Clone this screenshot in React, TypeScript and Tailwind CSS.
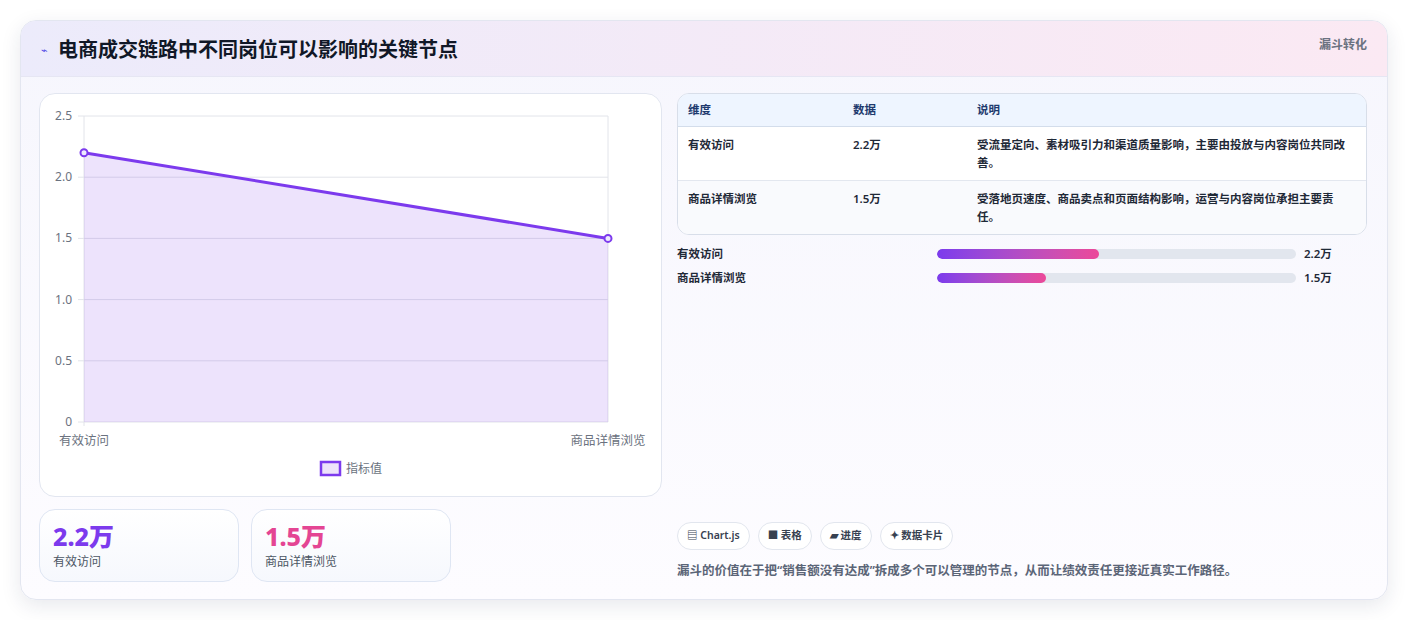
import React from "react";

const font = { fontFamily: '"Noto Sans", "Noto Sans CJK SC", sans-serif' };

function Chart() {
  const x0 = 44, x1 = 568, yTop = 22, yBot = 328;
  const y = (v: number) => yBot - (v / 2.5) * (yBot - yTop);
  const ticks = [0, 0.5, 1, 1.5, 2, 2.5];
  return (
    <svg width="623" height="403" className="block">
      {ticks.map((t) => (
        <g key={t}>
          <line x1={x0 - 6} x2={x1} y1={y(t)} y2={y(t)} stroke="#e2e4ea" strokeWidth="1" />
          <text x={x0 - 12} y={y(t) + 4} textAnchor="end" fontSize="12" fill="#6b7280" style={font}>
            {t === 0 ? "0" : t.toFixed(1)}
          </text>
        </g>
      ))}
      <line x1={x0} x2={x0} y1={yTop} y2={yBot + 4} stroke="#e2e4ea" />
      <line x1={x1} x2={x1} y1={yTop} y2={yBot} stroke="#e2e4ea" />
      <polygon points={`${x0},${y(2.2)} ${x1},${y(1.5)} ${x1},${yBot} ${x0},${yBot}`} fill="#7c3aed" fillOpacity="0.14" />
      <line x1={x0} y1={y(2.2)} x2={x1} y2={y(1.5)} stroke="#7c3aed" strokeWidth="3" />
      <circle cx={x0} cy={y(2.2)} r="3.5" fill="#ede9fe" stroke="#7c3aed" strokeWidth="2" />
      <circle cx={x1} cy={y(1.5)} r="3.5" fill="#ede9fe" stroke="#7c3aed" strokeWidth="2" />
      <text x={x0} y={351} textAnchor="middle" fontSize="12.5" fill="#6b7280" style={font}>有效访问</text>
      <text x={x1} y={351} textAnchor="middle" fontSize="12.5" fill="#6b7280" style={font}>商品详情浏览</text>
      <rect x={281} y={368} width={19} height={13} fill="#ede3fa" stroke="#7c3aed" strokeWidth="2.5" />
      <text x={306} y={379} fontSize="12" fill="#6b7280" style={font}>指标值</text>
    </svg>
  );
}

export default function App() {
  const rows = [
    ["有效访问", "2.2万", "受流量定向、素材吸引力和渠道质量影响，主要由投放与内容岗位共同改善。"],
    ["商品详情浏览", "1.5万", "受落地页速度、商品卖点和页面结构影响，运营与内容岗位承担主要责任。"],
  ];
  const bars = [["有效访问", 45, "2.2万"], ["商品详情浏览", 30.5, "1.5万"]] as const;
  return (
    <div className="w-[1408px] h-[620px] bg-white pt-5 px-5" style={font}>
      <div className="rounded-2xl border border-[#e3e6f0] shadow-[0_6px_20px_rgba(30,41,80,0.10)] overflow-hidden bg-gradient-to-b from-[#f6f6fd] to-[#fdfcff] h-[580px]">
        <div className="h-[56px] flex items-start justify-between px-5 bg-gradient-to-r from-[#ecebfb] to-[#fbe9f3] border-b border-[#e6e6f3]">
          <div className="flex items-center gap-[10px] mt-[14px]">
            <span className="text-[11px] text-[#4f46e5]">⌁</span>
            <span className="text-[20px] font-bold text-[#111827]">电商成交链路中不同岗位可以影响的关键节点</span>
          </div>
          <span className="text-[12px] font-semibold text-[#6b7280] mt-[15px]">漏斗转化</span>
        </div>
        <div className="flex gap-[15px] pl-[18px] pr-5 pt-4">
          <div className="w-[623px] flex flex-col gap-3">
            <div className="h-[404px] rounded-2xl border border-[#e2e6f0] bg-white overflow-hidden">
              <Chart />
            </div>
            <div className="flex gap-3">
              {[["2.2万", "text-[#7c3aed]", "有效访问"], ["1.5万", "text-[#e44593]", "商品详情浏览"]].map(([v, c, l]) => (
                <div key={l} className="w-[200px] h-[73px] rounded-2xl border border-[#dfe6f3] bg-gradient-to-b from-white to-[#f6f8fd] px-[13px] pt-[10px]">
                  <div className={`text-[25px] font-extrabold leading-[32px] ${c}`}>{v}</div>
                  <div className="text-[12px] text-[#4b5563] mt-[1px]">{l}</div>
                </div>
              ))}
            </div>
          </div>
          <div className="flex-1 flex flex-col h-[488px]">
            <div className="rounded-xl border border-[#d8dee9] overflow-hidden bg-white text-[11.5px] font-semibold text-[#1f2937]">
              <div className="flex bg-[#eef5ff] border-b border-[#d3ddeb] h-[33px] items-center text-[#1e3a6e]">
                <div className="w-[175px] pl-[10px]">维度</div>
                <div className="w-[124px]">数据</div>
                <div className="flex-1">说明</div>
              </div>
              {rows.map((r, i) => (
                <div key={i} className={`flex pt-[9px] pb-[8px] ${i === 0 ? "border-b border-[#e3e7ef] bg-white" : "bg-[#f9fafd]"}`}>
                  <div className="w-[175px] pl-[10px] leading-[18px]">{r[0]}</div>
                  <div className="w-[124px] leading-[18px]">{r[1]}</div>
                  <div className="flex-1 pr-[16px] leading-[18px]">{r[2]}</div>
                </div>
              ))}
            </div>
            <div className="flex flex-col gap-[8px] mt-[11px]">
              {bars.map(([l, p, v]) => (
                <div key={l} className="flex items-center h-[16px] text-[11.5px] font-semibold text-[#1f2937]">
                  <div className="w-[260px]">{l}</div>
                  <div className="w-[359px] h-[10px] rounded-full bg-[#e2e6ee] overflow-hidden">
                    <div className="h-full rounded-full bg-gradient-to-r from-[#7c3aed] to-[#ec4899]" style={{ width: `${p}%` }} />
                  </div>
                  <div className="ml-2">{v}</div>
                </div>
              ))}
            </div>
            <div className="mt-auto">
              <div className="flex gap-2">
                {["▤ Chart.js", "■ 表格", "▰ 进度", "✦ 数据卡片"].map((t) => (
                  <span key={t} className="h-[28px] px-[9px] rounded-full border border-[#e2e6ee] bg-white text-[10.5px] font-semibold text-[#374151] flex items-center">{t}</span>
                ))}
              </div>
              <div className="text-[12.5px] font-semibold text-[#5b6577] mt-[12px]">漏斗的价值在于把“销售额没有达成”拆成多个可以管理的节点，从而让绩效责任更接近真实工作路径。</div>
            </div>
          </div>
        </div>
      </div>
    </div>
  );
}
